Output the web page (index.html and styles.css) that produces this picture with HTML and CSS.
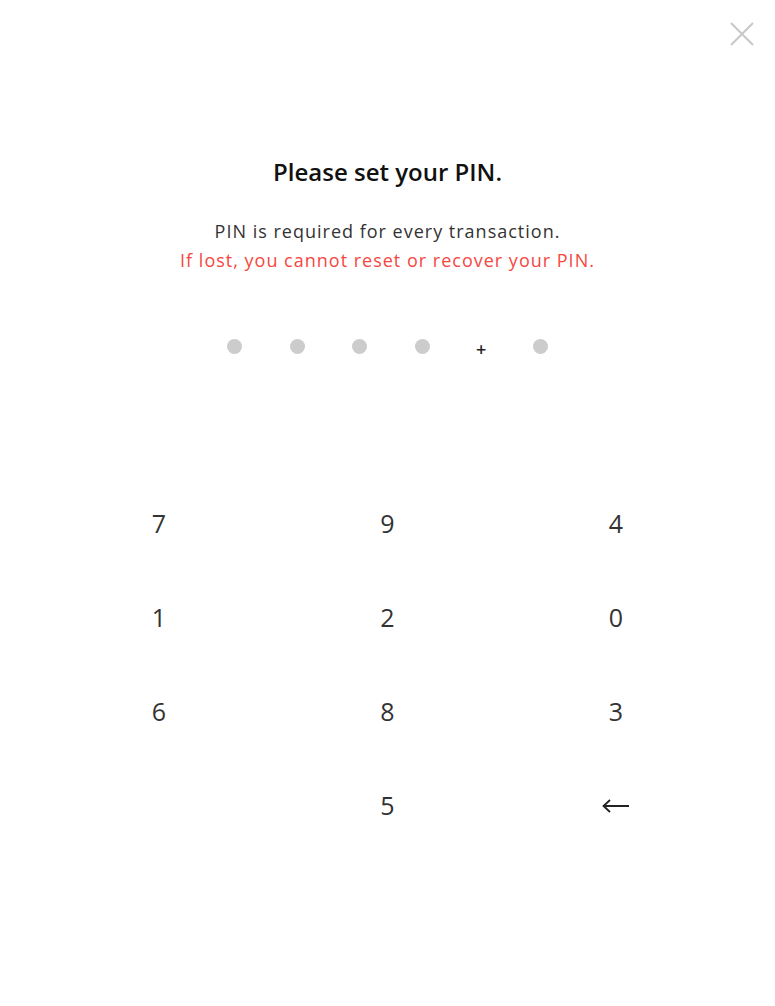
FILE: index.html
```html
<!DOCTYPE html>
<html lang="en">
<head>
<meta charset="utf-8">
<title>Set PIN</title>
<link rel="stylesheet" href="styles.css">
</head>
<body>
<div class="modal">
  <button class="close" aria-label="Close">
    <svg width="26" height="26" viewBox="0 0 26 26"><path d="M2 2 L24 24 M24 2 L2 24" stroke="#c8c8c8" stroke-width="2" fill="none"/></svg>
  </button>
  <h1 class="title">Please set your PIN.</h1>
  <p class="sub">PIN is required for every transaction.<br><span class="warn">If lost, you cannot reset or recover your PIN.</span></p>
  <div class="dots">
    <span class="dot"></span>
    <span class="dot"></span>
    <span class="dot"></span>
    <span class="dot"></span>
    <span class="plus">+</span>
    <span class="dot"></span>
  </div>
  <div class="keypad">
    <button class="key">7</button>
    <button class="key">9</button>
    <button class="key">4</button>
    <button class="key">1</button>
    <button class="key">2</button>
    <button class="key">0</button>
    <button class="key">6</button>
    <button class="key">8</button>
    <button class="key">3</button>
    <span class="key empty"></span>
    <button class="key">5</button>
    <button class="key back" aria-label="Backspace">
      <svg width="28" height="14" viewBox="0 0 28 14"><path d="M1.5 7 H27 M8 1 L1.5 7 L8 13" stroke="#222" stroke-width="1.8" fill="none"/></svg>
    </button>
  </div>
</div>
</body>
</html>
```

FILE: styles.css
```css
* { box-sizing: border-box; }
html, body {
  margin: 0;
  padding: 0;
  background: #fff;
}
body {
  font-family: "Open Sans", "Noto Sans", sans-serif;
  color: #222;
}
.modal {
  position: relative;
  width: 775px;
  height: 1006px;
  background: #fff;
  display: flex;
  flex-direction: column;
  align-items: center;
  padding-top: 156px;
}
.close {
  position: absolute;
  top: 21px;
  right: 20px;
  width: 26px;
  height: 26px;
  padding: 0;
  border: 0;
  background: none;
  cursor: pointer;
}
.close svg { display: block; }
.title {
  margin: 0;
  font-size: 24px;
  line-height: 32px;
  font-weight: 600;
  color: #111;
}
.sub {
  margin: 29px 0 0;
  font-size: 18px;
  line-height: 29px;
  letter-spacing: 1px;
  text-align: center;
  color: #333;
}
.warn { color: #f5473f; }
.dots {
  margin-top: 61px;
  height: 20px;
  display: flex;
  align-items: center;
  gap: 47.5px;
}
.dot {
  width: 15px;
  height: 15px;
  border-radius: 50%;
  background: #cccccc;
}
.plus {
  width: 8px;
  display: flex;
  justify-content: center;
  font-size: 18px;
  font-weight: 600;
  line-height: 20px;
  color: #222;
  transform: translateY(3px);
}
.keypad {
  margin-top: 120px;
  display: grid;
  grid-template-columns: repeat(3, 228.5px);
  grid-auto-rows: 94px;
}
.key {
  border: 0;
  background: none;
  padding: 0;
  font-family: inherit;
  font-size: 25px;
  color: #333;
  display: flex;
  align-items: center;
  justify-content: center;
  cursor: pointer;
}
.back svg { display: block; transform: translateY(1px); }
```
